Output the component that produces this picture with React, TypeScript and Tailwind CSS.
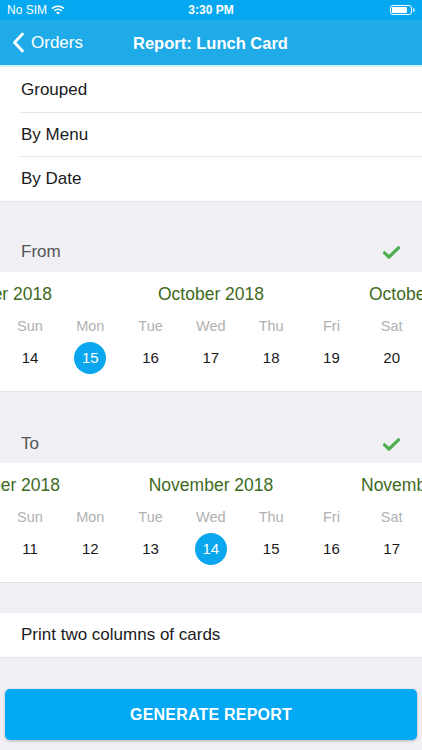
import React from "react";

const font = { fontFamily: '"Liberation Sans", Arial, sans-serif' };

function Check() {
  return (
    <svg width="17" height="13" viewBox="0 0 17 13">
      <path d="M1.5 6.8 L6 11 L15.5 1.8" stroke="#4caf50" strokeWidth="3.2" fill="none" strokeLinecap="round" strokeLinejoin="round" />
    </svg>
  );
}

function Calendar({ left, center, right, days, selected, leftCls, rightCls }: { left: string; center: string; right: string; days: number[]; selected: number; leftCls: string; rightCls: string }) {
  const names = ["Sun", "Mon", "Tue", "Wed", "Thu", "Fri", "Sat"];
  return (
    <div className="bg-white h-[120px] border-b border-[#e3e3e6] overflow-hidden">
      <div className="relative h-[44px] flex items-center justify-center text-[17.5px] leading-[26px] text-[#3f6a1e]">
        <span className={leftCls}>{left}</span>
        <span className="whitespace-nowrap">{center}</span>
        <span className={rightCls}>{right}</span>
      </div>
      <div className="grid grid-cols-7 h-[22px] items-center text-[14.5px] text-[#b1b1b1]">
        {names.map((n) => (
          <div key={n} className="w-[60px] text-center">{n}</div>
        ))}
      </div>
      <div className="grid grid-cols-7 mt-[2px] h-[36px] items-center text-[15px] text-[#1a1a1a]">
        {days.map((d) => (
          <div key={d} className="w-[60px] flex justify-center">
            {d === selected ? (
              <div className="w-[32px] h-[32px] rounded-full bg-[#0aa6ee] text-white flex items-center justify-center">{d}</div>
            ) : (
              <span>{d}</span>
            )}
          </div>
        ))}
      </div>
    </div>
  );
}

export default function App() {
  return (
    <div className="w-[422px] h-[750px] bg-[#efeff4] overflow-hidden relative" style={font}>
      {/* status bar */}
      <div className="h-[20px] bg-[#05a8f0] flex items-center justify-between px-[7px] text-white text-[12px]">
        <div className="flex items-center gap-[4px] w-[100px]">
          <span>No SIM</span>
          <svg width="14" height="10" viewBox="0 0 14 10">
            <path d="M1 3.6 A9 9 0 0 1 13 3.6" stroke="white" strokeWidth="1.6" fill="none" />
            <path d="M3.3 5.8 A5.8 5.8 0 0 1 10.7 5.8" stroke="white" strokeWidth="1.6" fill="none" />
            <path d="M7 9.6 L5.2 7.7 A2.6 2.6 0 0 1 8.8 7.7 Z" fill="white" />
          </svg>
        </div>
        <div className="font-bold text-[12px]">3:30 PM</div>
        <div className="w-[100px] flex justify-end">
          <div className="flex items-center">
            <div className="w-[22px] h-[10px] rounded-[3px] border border-white p-[1px]">
              <div className="w-[15px] h-full bg-white rounded-[1px]" />
            </div>
            <div className="w-[1.5px] h-[4px] bg-white/70 rounded-r ml-[1px]" />
          </div>
        </div>
      </div>
      {/* nav bar */}
      <div className="h-[45px] bg-[#1fabe8] flex items-center text-white relative">
        <div className="flex items-center pl-[12px] gap-[6px]">
          <svg width="13" height="21" viewBox="0 0 13 21">
            <path d="M10.5 2 L2.5 10.5 L10.5 19" stroke="white" strokeWidth="2.8" fill="none" strokeLinecap="round" strokeLinejoin="round" />
          </svg>
          <span className="text-[17px]">Orders</span>
        </div>
        <div className="absolute left-[133px] top-[11px] text-[16.5px] font-bold whitespace-nowrap">Report: Lunch Card</div>
      </div>
      <div className="h-[2px] bg-[#d8f0fb]" />
      {/* options */}
      <div className="bg-white text-[17px] text-[#1a1a1a]">
        <div className="h-[45px] flex items-center pl-[21px]">Grouped</div>
        <div className="ml-[20px] h-px bg-[#e6e6e9]" />
        <div className="h-[43px] flex items-center pl-[21px]">By Menu</div>
        <div className="ml-[20px] h-px bg-[#e6e6e9]" />
        <div className="h-[44px] flex items-center pl-[21px]">By Date</div>
      </div>
      {/* From */}
      <div className="h-[71px] border-t border-[#e3e3e6] flex items-end justify-between pl-[21px] pr-[22px] pb-[8px] text-[17px] text-[#555555]">
        <span>From</span>
        <span className="mb-[5px]"><Check /></span>
      </div>
      <Calendar
        left="September 2018"
        center="October 2018"
        right="October 2018"
        days={[14, 15, 16, 17, 18, 19, 20]}
        selected={15}
        leftCls="absolute right-[370px] top-[9px] whitespace-nowrap"
        rightCls="absolute left-[369px] top-[9px] whitespace-nowrap"
      />
      {/* To */}
      <div className="h-[71px] flex items-end justify-between pl-[21px] pr-[22px] pb-[7px] text-[17px] text-[#555555]">
        <span>To</span>
        <span className="mb-[5px]"><Check /></span>
      </div>
      <Calendar
        left="October 2018"
        center="November 2018"
        right="November 2018"
        days={[11, 12, 13, 14, 15, 16, 17]}
        selected={14}
        leftCls="absolute right-[362px] top-[9px] whitespace-nowrap"
        rightCls="absolute left-[361px] top-[9px] whitespace-nowrap"
      />
      <div className="h-[30px]" />
      <div className="bg-white h-[45px] border-b border-[#e3e3e6] flex items-center pl-[21px] text-[17px] text-[#1a1a1a]">
        Print two columns of cards
      </div>
      <div className="px-[5px] pt-[31px]">
        <div className="h-[51px] rounded-[5px] bg-[#03a9f4] shadow-[0_1px_3px_rgba(0,0,0,0.25)] flex items-center justify-center text-white text-[16px] font-bold tracking-[0.2px]">
          GENERATE REPORT
        </div>
      </div>
    </div>
  );
}
